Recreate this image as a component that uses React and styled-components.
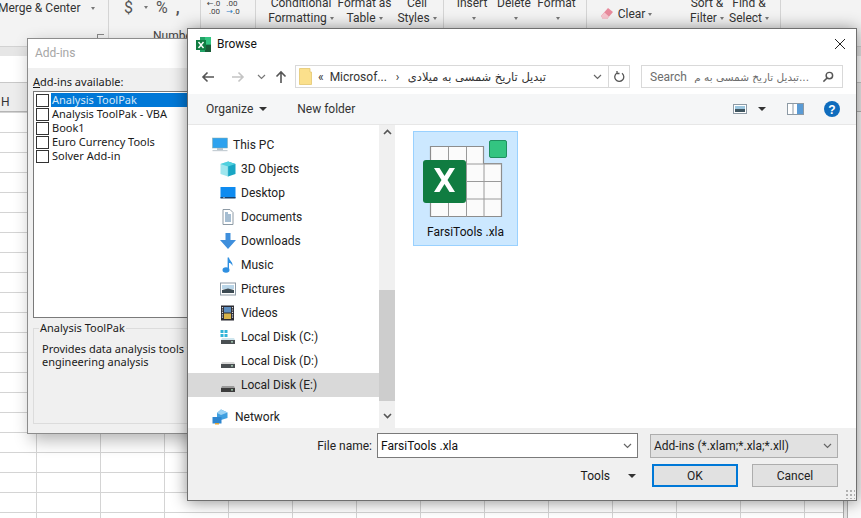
import React from 'react';
import styled, { createGlobalStyle } from 'styled-components';

const GlobalStyle = createGlobalStyle`
  html, body { margin: 0; padding: 0; background: #fff; }
  body { width: 861px; height: 518px; overflow: hidden; font-family: Roboto, "DejaVu Sans", sans-serif; font-size: 12px; color: #1a1a1a; }
`;

const Screen = styled.div`
  position: relative;
  width: 861px;
  height: 518px;
  overflow: hidden;
`;

const Ribbon = styled.div`
  display: flex;
  height: 46px;
  background: #f3f3f3;
  border-bottom: 1px solid #d2d2d2;
  overflow: hidden;
`;

const Group = styled.div`
  display: flex;
  flex: none;
  width: ${(p) => p.$w}px;
  height: 100%;
  padding-left: ${(p) => p.$pad || 0}px;
  box-sizing: border-box;
  border-right: 1px solid #d4d4d4;
  position: relative;
`;

const RibbonBtn = styled.div`
  width: ${(p) => p.$w}px;
  flex: none;
  text-align: center;
  line-height: 15px;
  margin-top: ${(p) => p.$mt ?? -4}px;
  margin-left: ${(p) => p.$ml || 0}px;
  font-size: 12px;
  color: #333;
  white-space: nowrap;
`;

const Caret = styled.span`
  display: inline-block;
  width: 0;
  height: 0;
  margin-left: ${(p) => p.$ml ?? 3}px;
  vertical-align: 2px;
  border-left: 2.5px solid transparent;
  border-right: 2.5px solid transparent;
  border-top: 3px solid ${(p) => p.$color || '#777'};
`;

const Merge = styled.div`
  margin: 1px 0 0 -2px;
  font-size: 12px;
  line-height: 15px;
  color: #333;
  white-space: nowrap;
`;

const NumSigns = styled.div`
  display: flex;
  gap: 8px;
  align-items: center;
  height: 15px;
  font-size: 16px;
  color: #555;
`;

const GroupLabel = styled.div`
  position: absolute;
  left: 44px;
  top: 29px;
  font-size: 12px;
  color: #444;
`;

const Launcher = styled.span`
  position: absolute;
  right: 4px;
  bottom: 5px;
  width: 6px;
  height: 6px;
  border-left: 1px solid #888;
  border-top: 1px solid #888;
`;

const Decimals = styled.div`
  font-size: 8px;
  line-height: 8px;
  color: #444;
  margin: 0 0 0 6px;
  white-space: nowrap;
  em { color: #2b7cc4; font-style: normal; }
`;

const FormulaBar = styled.div`
  height: 35px;
  box-sizing: border-box;
  background: #fff;
  border-top: 9px solid #e6e6e6;
`;

const ColumnHeads = styled.div`
  height: 30px;
  box-sizing: border-box;
  padding-left: 1px;
  background: #ededed;
  border-top: 1px solid #c8c8c8;
  border-bottom: 1px solid #b5b5b5;
  line-height: 39px;
  font-size: 12px;
  color: #333;
`;

const SheetArea = styled.div`
  display: flex;
  height: 406px;
`;

const Sheet = styled.div`
  flex: 1;
  background-color: #fff;
  background-image:
    linear-gradient(#d4d4d4 1px, transparent 1px),
    linear-gradient(90deg, #d4d4d4 1px, transparent 1px);
  background-size: 100% 20px, 64px 100%;
  background-position: 0 0, 36px 0;
`;

const SheetScroll = styled.div`
  width: 18px;
  flex: none;
  background: linear-gradient(90deg, #aaa 1px, #e4e4e4 1px, #e4e4e4 4px, #aaa 4px, #aaa 5px, #fafafa 5px);
`;

/* free-floating windows */
const AddInsWindow = styled.div`
  position: absolute;
  left: 27px;
  top: 38px;
  width: 240px;
  height: 396px;
  background: #f0f0f0;
  border: 1px solid #8c8c8c;
  box-sizing: border-box;
  box-shadow: 4px 6px 16px rgba(0, 0, 0, 0.3);
  display: flex;
  flex-direction: column;
`;

const AddInsTitle = styled.div`
  height: 29px;
  flex: none;
  background: #fff;
  color: #a6a6a6;
  padding-left: 7px;
  line-height: 29px;
  font-size: 12px;
`;

const AddInsBody = styled.div`
  display: flex;
  flex-direction: column;
  padding: 6px 0 0 5px;
  font-family: "Noto Sans", sans-serif;
`;

const AddInsLabel = styled.div`
  line-height: 15px;
  margin-bottom: 2px;
  font-size: 11px;
  u { text-decoration: underline; }
`;

const ListBox = styled.div`
  height: 227px;
  background: #fff;
  border: 1px solid #7a7a7a;
  box-sizing: border-box;
  padding: 1px 2px;
`;

const ListRow = styled.div`
  display: flex;
  align-items: center;
  height: 14px;
`;

const CheckBox = styled.span`
  flex: none;
  width: 11px;
  height: 11px;
  border: 1px solid #333;
  background: #fff;
  margin-right: 2px;
`;

const ListText = styled.span`
  flex: 1;
  padding-left: 1px;
  height: 14px;
  line-height: 14px;
  font-size: 11px;
  white-space: nowrap;
  background: ${(p) => (p.$selected ? '#0078d7' : 'transparent')};
  color: ${(p) => (p.$selected ? '#d5e8f8' : '#1a1a1a')};
`;

const GroupBox = styled.div`
  position: relative;
  height: 96px;
  margin-top: 10px;
  border: 1px solid #dcdcdc;
  box-sizing: border-box;
  padding: 13px 0 0 8px;
  font-size: 11px;
  line-height: 13px;
  white-space: nowrap;
`;

const Legend = styled.span`
  position: absolute;
  left: 5px;
  top: -8px;
  padding: 0 1px;
  background: #f0f0f0;
  line-height: 14px;
`;

const BrowseWindow = styled.div`
  position: absolute;
  left: 187px;
  top: 28px;
  width: 670px;
  height: 473px;
  box-sizing: border-box;
  background: #fff;
  border: 1px solid #6f6f6f;
  box-shadow: 0 1px 15px rgba(0, 0, 0, 0.45);
  display: flex;
  flex-direction: column;
`;

const TitleBar = styled.div`
  height: 30px;
  flex: none;
  display: flex;
  align-items: center;
  padding: 0 10px 0 7px;
  gap: 5px;
  font-size: 12px;
  color: #111;
`;

const Spacer = styled.div`
  flex: 1;
`;

const NavBar = styled.div`
  height: 35px;
  flex: none;
  display: flex;
  align-items: center;
  padding: 0 0 0 13px;
`;

const NavIcon = styled.svg`
  flex: none;
  display: block;
  margin-right: ${(p) => p.$mr || 0}px;
`;

const AddressBox = styled.div`
  width: 335px;
  height: 23px;
  flex: none;
  box-sizing: border-box;
  border: 1px solid #d9d9d9;
  display: flex;
  align-items: center;
  padding-left: 3px;
  margin-left: 8px;
  font-size: 12px;
  color: #333;
`;

const Crumb = styled.span`
  margin-left: ${(p) => p.$ml || 0}px;
  white-space: nowrap;
`;

const PersianPath = styled.span`
  font-family: "DejaVu Sans", sans-serif;
  font-size: 11.5px;
  white-space: nowrap;
  margin-right: 47px;
  flex: none;
`;

const AddressEnd = styled.div`
  width: 20px;
  height: 100%;
  flex: none;
  margin-left: 6px;
  border-left: 1px solid #d9d9d9;
  display: flex;
  align-items: center;
  justify-content: center;
`;

const SearchBox = styled.div`
  width: 202px;
  height: 23px;
  flex: none;
  margin-left: 11px;
  box-sizing: border-box;
  border: 1px solid #d9d9d9;
  display: flex;
  align-items: center;
  padding: 0 8px 0 8px;
  font-size: 12px;
  color: #6d6d6d;
  white-space: nowrap;
  overflow: hidden;
  gap: 3px;
`;

const SearchPersian = styled.span`
  font-family: "DejaVu Sans", sans-serif;
  font-size: 10.5px;
  flex: 1;
  margin-right: 10px;
  white-space: nowrap;
  overflow: hidden;
`;

const Toolbar = styled.div`
  height: 30px;
  flex: none;
  background: #f5f6f7;
  border-bottom: 1px solid #e7e7e7;
  display: flex;
  align-items: center;
  padding: 0 16px 0 18px;
  font-size: 12px;
  color: #333;
`;

const ToolItem = styled.span`
  margin-left: ${(p) => p.$ml || 0}px;
  white-space: nowrap;
`;

const ToolCaret = styled.span`
  display: inline-block;
  width: 0;
  height: 0;
  margin: ${(p) => p.$m || '0 0 0 6px'};
  vertical-align: 1px;
  border-left: 4px solid transparent;
  border-right: 4px solid transparent;
  border-top: 4px solid #333;
`;

const Content = styled.div`
  flex: 1;
  display: flex;
  min-height: 0;
`;

const NavPane = styled.div`
  width: 191px;
  flex: none;
  padding-top: 8px;
  box-sizing: border-box;
`;

const NavRow = styled.div`
  height: 24px;
  display: flex;
  align-items: center;
  padding-left: ${(p) => (p.$top ? 24 : 32)}px;
  gap: 5px;
  font-size: 12px;
  color: #222;
  background: ${(p) => (p.$active ? '#d9d9d9' : 'transparent')};
  margin-top: ${(p) => p.$mt || 0}px;
`;

const Scrollbar = styled.div`
  width: 16px;
  flex: none;
  background: #f0f0f0;
  display: flex;
  flex-direction: column;
  align-items: center;
  justify-content: space-between;
  position: relative;
  padding: 4px 0 9px;
  box-sizing: border-box;
`;

const Thumb = styled.div`
  position: absolute;
  left: 0;
  right: 0;
  top: 165px;
  height: 111px;
  background: #cdcdcd;
`;

const FilePane = styled.div`
  flex: 1;
  padding: 6px 0 0 18px;
`;

const FileTile = styled.div`
  width: 105px;
  height: 115px;
  box-sizing: border-box;
  background: #cce8ff;
  border: 1px solid #99d1ff;
  display: flex;
  flex-direction: column;
  align-items: center;
  gap: 5px;
  font-size: 12px;
  color: #111;
  line-height: 16px;
`;

const Footer = styled.div`
  height: 72px;
  flex: none;
  background: #f0f0f0;
  position: relative;
  display: flex;
  flex-direction: column;
  padding: 5px 18px 0 0;
  box-sizing: border-box;
`;

const FooterRow = styled.div`
  display: flex;
  align-items: center;
  justify-content: flex-end;
  margin-top: ${(p) => p.$mt || 0}px;
`;

const FieldLabel = styled.span`
  margin-right: 5px;
  font-size: 12px;
  color: #222;
`;

const NameInput = styled.div`
  width: 261px;
  height: 25px;
  box-sizing: border-box;
  background: #fff;
  border: 1px solid #7a7a7a;
  display: flex;
  align-items: center;
  justify-content: space-between;
  padding: 0 5px 0 3px;
  font-size: 12px;
  color: #111;
`;

const TypeSelect = styled.div`
  width: 188px;
  height: 24px;
  margin-left: 12px;
  box-sizing: border-box;
  background: #e1e1e1;
  border: 1px solid #adadad;
  display: flex;
  align-items: center;
  justify-content: space-between;
  padding: 0 5px 0 3px;
  font-size: 12px;
  color: #222;
`;

const Button = styled.div`
  width: 86px;
  height: 23px;
  box-sizing: border-box;
  background: #e1e1e1;
  border: ${(p) => (p.$primary ? '2px solid #0078d7' : '1px solid #adadad')};
  display: flex;
  align-items: center;
  justify-content: center;
  margin-left: ${(p) => p.$ml || 0}px;
  font-size: 12px;
  color: #222;
`;

const Grip = styled.div`
  position: absolute;
  right: 1px;
  bottom: 1px;
  width: 10px;
  height: 10px;
  background-image: radial-gradient(#b0b0b0 1px, transparent 1.2px);
  background-size: 4px 4px;
`;

const Chevron = ({ up, color = '#666', sw = 1.2, w = 9, h = 6 }) => (
  <svg width={w} height={h} viewBox="0 0 9 6" fill="none" stroke={color} strokeWidth={sw}>
    <path d={up ? 'M1 5 L4.5 1.5 L8 5' : 'M1 1 L4.5 4.5 L8 1'} />
  </svg>
);

const ExcelSmall = () => (
  <svg width="17" height="17" viewBox="0 0 17 17">
    <rect x="5" y="1" width="11" height="15" fill="#21a366" />
    <rect x="10" y="1" width="6" height="7" fill="#33c481" />
    <rect x="10" y="9" width="6" height="7" fill="#185c37" />
    <rect x="1" y="4" width="10" height="10" fill="#107c41" />
    <path d="M3.5 6 L8.5 12 M8.5 6 L3.5 12" stroke="#fff" strokeWidth="1.4" />
  </svg>
);

const PcIcon = () => (
  <svg width="16" height="16" viewBox="0 0 16 16">
    <rect x="0.5" y="1" width="15" height="10" fill="#2ea2ee" stroke="#8aa" strokeWidth="0.5" />
    <rect x="5" y="11" width="6" height="2" fill="#b9c4cc" />
    <rect x="0.5" y="13" width="15" height="1.2" fill="#c5ced4" />
  </svg>
);

const CubeIcon = () => (
  <svg width="16" height="16" viewBox="0 0 16 16">
    <path d="M8 0.5 L15.5 3 V13 L8 15.5 Z" fill="#19a6c4" />
    <path d="M8 0.5 L0.5 3 V13 L8 15.5 Z" fill="#9fe6ee" />
    <path d="M0.5 3 L8 5.5 L15.5 3 L8 0.5 Z" fill="#4fd0de" />
    <path d="M8 5.5 V15.5" stroke="#5cc6d8" strokeWidth="0.5" />
  </svg>
);

const DesktopIcon = () => (
  <svg width="16" height="16" viewBox="0 0 16 16">
    <rect x="0.5" y="2" width="15" height="11" fill="#0e8bf0" />
    <rect x="0.5" y="12" width="15" height="1.5" fill="#17406b" />
    <rect x="3" y="12.4" width="2" height="0.8" fill="#bcd" />
  </svg>
);

const DocIcon = () => (
  <svg width="16" height="16" viewBox="0 0 16 16">
    <path d="M3 0.5 H10 L13 3.5 V15.5 H3 Z" fill="#fff" stroke="#8d9aa5" />
    <path d="M5 4 H8 M5 6 H11 M5 8 H11 M5 10 H11 M5 12 H11" stroke="#4b7ba3" strokeWidth="1" />
  </svg>
);

const DownloadIcon = () => (
  <svg width="16" height="16" viewBox="0 0 16 16">
    <path d="M5.5 0 H10.5 V7 H16 L8 16 L0 7 H5.5 Z" fill="#3f8fdc" />
  </svg>
);

const MusicIcon = () => (
  <svg width="16" height="16" viewBox="0 0 16 16">
    <ellipse cx="6" cy="13" rx="3.5" ry="2.8" fill="#2f8fe0" />
    <path d="M7.6 13 V0.5 H9 C9.5 4 13 4.5 12.5 9 C11.5 6.5 10 6 9 6 V13 Z" fill="#2f8fe0" />
  </svg>
);

const PictureIcon = () => (
  <svg width="16" height="16" viewBox="0 0 16 16">
    <rect x="0.5" y="2" width="15" height="12" fill="#fff" stroke="#8d9aa5" />
    <rect x="2" y="4" width="12" height="4" fill="#b9d5e8" />
    <path d="M2 9 L8 7.5 L14 9 V12 H2 Z" fill="#3c4a52" />
  </svg>
);

const VideoIcon = () => (
  <svg width="16" height="16" viewBox="0 0 16 16">
    <rect x="1" y="0.5" width="13" height="15" fill="#2b2b33" />
    <rect x="4" y="2" width="7" height="5.5" fill="#5f8fc0" />
    <rect x="4" y="8.5" width="7" height="5.5" fill="#d8b44a" />
    <path d="M2.5 2 V14 M12.5 2 V14" stroke="#ddd" strokeWidth="1.2" strokeDasharray="1.2 1.2" />
  </svg>
);

const DiskIcon = ({ windows, dark }) => (
  <svg width="16" height="16" viewBox="0 0 16 16">
    {windows && (
      <g fill="#2fb4d8">
        <rect x="0.5" y="1" width="3" height="3" />
        <rect x="4.5" y="1" width="3" height="3" />
        <rect x="0.5" y="5" width="3" height="3" />
        <rect x="4.5" y="5" width="3" height="3" />
      </g>
    )}
    <path d="M2 9 H14 L15 11 H1 Z" fill={dark ? '#9a9a9a' : windows ? '#cfe6ee' : '#d8d8d8'} />
    <rect x="1" y="11" width="14" height="4" fill={dark ? '#3c3c3c' : '#4a4f52'} />
    <rect x="11" y="12.4" width="2" height="1" fill="#cfd" />
  </svg>
);

const NetworkIcon = () => (
  <svg width="18" height="16" viewBox="0 0 18 16">
    <path d="M9 0.5 L15.5 3.5 V9 L9 11 L5 9 V4 Z" fill="#3f9fe0" />
    <path d="M9 0.5 L15.5 3.5 L9 6 L5 4 Z" fill="#9bd3f5" />
    <rect x="0.5" y="8" width="9" height="6.5" fill="#2f86cf" />
    <rect x="3" y="14" width="4" height="1.5" fill="#e0a53a" />
  </svg>
);

const FolderIcon = () => (
  <svg width="13" height="17" viewBox="0 0 13 17">
    <path d="M0.5 0.5 H11 V4 H12.5 V16.500 H0.5 Z" fill="#fbe08c" stroke="#e3c670" strokeWidth="0.8" />
  </svg>
);

const ExcelFile = () => (
  <svg width="103" height="87" viewBox="0 0 103 87" fill="none">
    <rect x="17" y="15" width="53" height="70" fill="#fbfbfb" />
    <rect x="70" y="32" width="18" height="53" fill="#fbfbfb" />
    <path d="M16.5 50 V14.500 H69.500 V31.500 H87.500 V84.500 H16.500 V50" stroke="#8d8d8d" strokeWidth="1.2" />
    <path d="M34.500 15 V85 M52.500 15 V85 M70 32 V85 M17 32 H88 M17 49.500 H88 M17 67 H88" stroke="#9a9a9a" strokeWidth="1" />
    <rect x="9" y="28" width="43" height="43" rx="3" fill="#107c41" />
    <path d="M20 36 L27.500 48 L20 60 H25.500 L30.500 52 L35.500 60 H41 L33.500 48 L41 36 H35.500 L30.500 44 L25.500 36 Z" fill="#fff" />
    <rect x="75.500" y="8.500" width="17" height="17" rx="1.500" fill="#33c481" stroke="#1f8f5f" />
  </svg>
);

const navItems = [
  { label: '3D Objects', icon: <CubeIcon /> },
  { label: 'Desktop', icon: <DesktopIcon /> },
  { label: 'Documents', icon: <DocIcon /> },
  { label: 'Downloads', icon: <DownloadIcon /> },
  { label: 'Music', icon: <MusicIcon /> },
  { label: 'Pictures', icon: <PictureIcon /> },
  { label: 'Videos', icon: <VideoIcon /> },
  { label: 'Local Disk (C:)', icon: <DiskIcon windows /> },
  { label: 'Local Disk (D:)', icon: <DiskIcon /> },
  { label: 'Local Disk (E:)', icon: <DiskIcon dark />, active: true },
];

const addIns = ['Analysis ToolPak', 'Analysis ToolPak - VBA', 'Book1', 'Euro Currency Tools', 'Solver Add-in'];

export default function App() {
  return (
    <Screen>
      <GlobalStyle />
      <Ribbon>
        <Group $w={109}>
          <Merge>Merge &amp; Center<Caret $ml={11} /></Merge>
          <Launcher />
        </Group>
        <Group $w={92} $pad={15}>
          <NumSigns><span>$</span><Caret /><span>%</span><b>,</b></NumSigns>
          <GroupLabel>Number</GroupLabel>
        </Group>
        <Group $w={55}>
          <Decimals>←.0<br /><span>&nbsp;.00</span></Decimals>
          <Decimals>.00<br /><em>→</em>.0</Decimals>
        </Group>
        <Group $w={188} $pad={12}>
          <RibbonBtn $w={66}>Conditional<br />Formatting<Caret /></RibbonBtn>
          <RibbonBtn $w={61}>Format as<br />Table<Caret /></RibbonBtn>
          <RibbonBtn $w={44}>Cell<br />Styles<Caret /></RibbonBtn>
        </Group>
        <Group $w={143} $pad={6}>
          <RibbonBtn $w={44}>Insert<br /><Caret /></RibbonBtn>
          <RibbonBtn $w={40}>Delete<br /><Caret /></RibbonBtn>
          <RibbonBtn $w={45}>Format<br /><Caret /></RibbonBtn>
        </Group>
        <Group $w={194} $pad={13}>
          <svg width="14" height="14" viewBox="0 0 14 14" style={{ marginTop: 7 }}>
            <path d="M8 1 L13 5 L7 12 L3 12 L1 9 Z" fill="#e88a9c" />
            <path d="M1 9 L3 12 L7 12 L9 9.500 L4.500 5.500 Z" fill="#f7c6cf" />
          </svg>
          <RibbonBtn $w={42} $mt={7}>Clear<Caret /></RibbonBtn>
          <RibbonBtn $w={40} $ml={31}>Sort &amp;<br />Filter<Caret /></RibbonBtn>
          <RibbonBtn $w={42} $ml={1}>Find &amp;<br />Select<Caret /></RibbonBtn>
        </Group>
      </Ribbon>
      <FormulaBar />
      <ColumnHeads>H</ColumnHeads>
      <SheetArea>
        <Sheet />
        <SheetScroll />
      </SheetArea>

      <AddInsWindow>
        <AddInsTitle>Add-ins</AddInsTitle>
        <AddInsBody>
          <AddInsLabel><u>A</u>dd-ins available:</AddInsLabel>
          <ListBox>
            {addIns.map((name, i) => (
              <ListRow key={name}>
                <CheckBox />
                <ListText $selected={i === 0}>{name}</ListText>
              </ListRow>
            ))}
          </ListBox>
          <GroupBox>
            <Legend>Analysis ToolPak</Legend>
            Provides data analysis tools for statistical and<br />engineering analysis
          </GroupBox>
        </AddInsBody>
      </AddInsWindow>

      <BrowseWindow>
        <TitleBar>
          <ExcelSmall />
          <span>Browse</span>
          <Spacer />
          <svg width="12" height="12" viewBox="0 0 12 12" stroke="#222" strokeWidth="1">
            <path d="M1 1 L11 11 M11 1 L1 11" />
          </svg>
        </TitleBar>
        <NavBar>
          <NavIcon width="14" height="12" viewBox="0 0 14 12" $mr={16} fill="none" stroke="#555" strokeWidth="1.6">
            <path d="M13 6 H2 M6.500 1.500 L2 6 L6.500 10.500" />
          </NavIcon>
          <NavIcon width="14" height="12" viewBox="0 0 14 12" $mr={12} fill="none" stroke="#c4c4c4" strokeWidth="1.6">
            <path d="M1 6 H12 M7.500 1.500 L12 6 L7.500 10.500" />
          </NavIcon>
          <NavIcon width="9" height="6" viewBox="0 0 9 6" $mr={9} fill="none" stroke="#777" strokeWidth="1.2">
            <path d="M1 1 L4.500 4.500 L8 1" />
          </NavIcon>
          <NavIcon width="12" height="14" viewBox="0 0 12 14" fill="none" stroke="#555" strokeWidth="1.6">
            <path d="M6 13 V2 M1.500 6.500 L6 2 L10.500 6.500" />
          </NavIcon>
          <AddressBox>
            <FolderIcon />
            <Crumb $ml={6}>«</Crumb>
            <Crumb $ml={6}>Microsof...</Crumb>
            <Crumb $ml={9}>›</Crumb>
            <Spacer />
            <PersianPath dir="rtl">تبدیل تاریخ شمسی به میلادی</PersianPath>
            <Chevron color="#666" />
            <AddressEnd>
              <svg width="11" height="12" viewBox="0 0 11 12" fill="none" stroke="#555" strokeWidth="1.3">
                <path d="M3 2 A4.500 4.500 0 1 0 8 2.300 M3 0 V2.500 H5.500" />
              </svg>
            </AddressEnd>
          </AddressBox>
          <SearchBox>
            Search
            <SearchPersian dir="rtl">...تبدیل تاریخ شمسی به م</SearchPersian>
            <svg width="12" height="12" viewBox="0 0 13 13" fill="none" stroke="#555" strokeWidth="1.6" style={{ flex: 'none' }}>
              <circle cx="8" cy="5" r="3.500" />
              <path d="M5.500 7.500 L1.500 11.500" />
            </svg>
          </SearchBox>
        </NavBar>
        <Toolbar>
          <ToolItem>Organize</ToolItem>
          <ToolCaret />
          <ToolItem $ml={30}>New folder</ToolItem>
          <Spacer />
          <svg width="14" height="10" viewBox="0 0 14 10">
            <rect x="0.500" y="0.500" width="13" height="9" fill="#fff" stroke="#8d9aa5" />
            <rect x="2" y="2" width="10" height="3" fill="#9cc6df" />
            <rect x="2" y="5" width="10" height="3" fill="#3f5560" />
          </svg>
          <ToolCaret $m="0 21px 0 11px" />
          <svg width="17" height="12" viewBox="0 0 17 12">
            <rect x="0.500" y="0.500" width="16" height="11" fill="#fff" stroke="#8d9aa5" />
            <rect x="10" y="1" width="6" height="10" fill="#5a9bd5" />
            <path d="M6 1 V11" stroke="#8d9aa5" />
          </svg>
          <svg width="16" height="16" viewBox="0 0 16 16" style={{ marginLeft: 20 }}>
            <circle cx="8" cy="8" r="8" fill="#0f6cbd" />
            <text x="8" y="12.500" textAnchor="middle" fontSize="12" fontWeight="700" fill="#fff" fontFamily="Liberation Sans">?</text>
          </svg>
        </Toolbar>
        <Content>
          <NavPane>
            <NavRow $top>
              <PcIcon />
              <span>This PC</span>
            </NavRow>
            {navItems.map((item) => (
              <NavRow key={item.label} $active={item.active}>
                {item.icon}
                <span>{item.label}</span>
              </NavRow>
            ))}
            <NavRow $top $mt={8}>
              <NetworkIcon />
              <span>Network</span>
            </NavRow>
          </NavPane>
          <Scrollbar>
            <Chevron up color="#555" sw={1.6} />
            <Thumb />
            <Chevron color="#555" sw={1.6} />
          </Scrollbar>
          <FilePane>
            <FileTile>
              <ExcelFile />
              <span>FarsiTools .xla</span>
            </FileTile>
          </FilePane>
        </Content>
        <Footer>
          <FooterRow>
            <FieldLabel>File name:</FieldLabel>
            <NameInput>FarsiTools .xla <Chevron /></NameInput>
            <TypeSelect>Add-ins (*.xlam;*.xla;*.xll) <Chevron /></TypeSelect>
          </FooterRow>
          <FooterRow $mt={6}>
            <span>Tools</span>
            <ToolCaret $m="0 0 0 18px" />
            <Button $primary $ml={16}>OK</Button>
            <Button $ml={14}>Cancel</Button>
          </FooterRow>
          <Grip />
        </Footer>
      </BrowseWindow>
    </Screen>
  );
}
